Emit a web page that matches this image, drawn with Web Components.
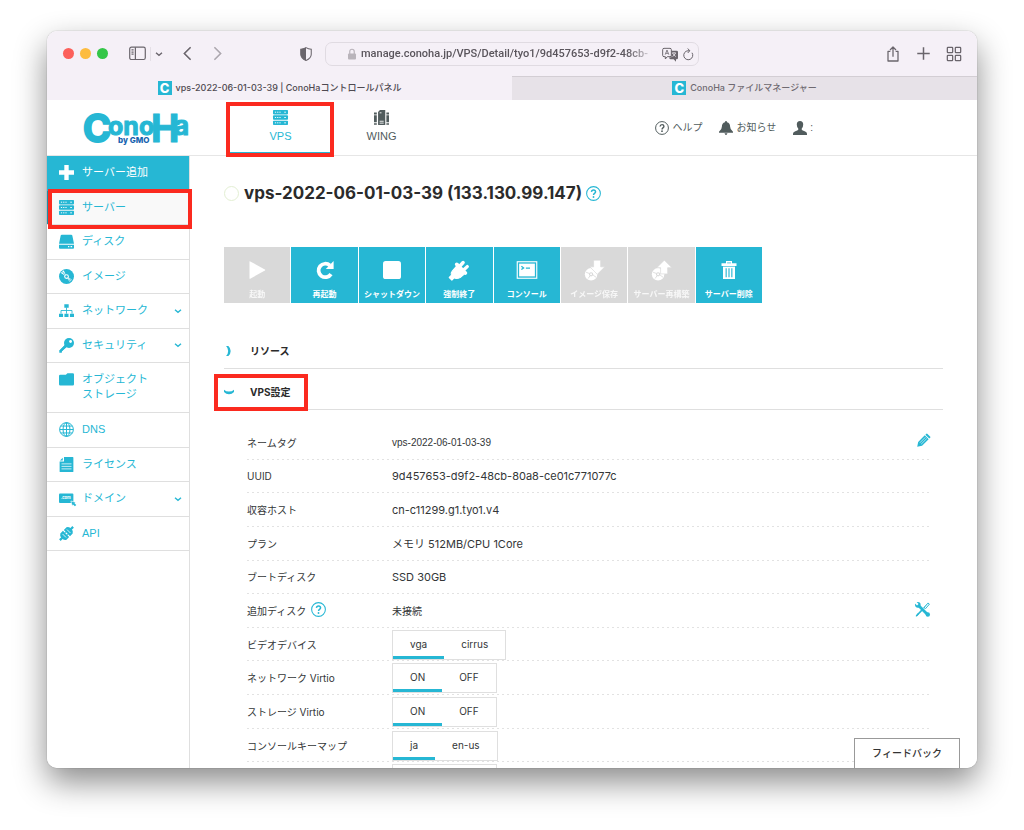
<!DOCTYPE html>
<html lang="ja">
<head>
<meta charset="utf-8">
<title>vps-2022-06-01-03-39 | ConoHa</title>
<style>
  :root {
    --cyan: #26b7d4;
    --ink: #333637;
    --line: #dfdfdf;
    --red: #fb2a1f;
    --ui: Inter, "Noto Sans CJK JP", sans-serif;
    --arial: "Liberation Sans", "Noto Sans CJK JP", sans-serif;
  }
  html, body { height: 100%; }
  body {
    margin: 0; padding: 31px 47px 62px; box-sizing: border-box;
    background: #fff; color: var(--ink); overflow: hidden;
    font: 10px/16px var(--ui);
  }
</style>
</head>
<body>
<mac-window>
  <safari-toolbar slot="toolbar"></safari-toolbar>
  <browser-tab slot="tabs" current>vps-2022-06-01-03-39 | ConoHaコントロールパネル</browser-tab>
  <browser-tab slot="tabs">ConoHa ファイルマネージャー</browser-tab>
  <conoha-header></conoha-header>
  <panel-layout>
    <side-nav slot="side">
      <side-item icon="plus" add>サーバー追加</side-item>
      <side-item icon="server" current>サーバー</side-item>
      <side-item icon="disk">ディスク</side-item>
      <side-item icon="cd">イメージ</side-item>
      <side-item icon="network" more>ネットワーク</side-item>
      <side-item icon="key" more>セキュリティ</side-item>
      <side-item icon="folder" tall>オブジェクト<br>ストレージ</side-item>
      <side-item icon="globe">DNS</side-item>
      <side-item icon="license">ライセンス</side-item>
      <side-item icon="domain" more>ドメイン</side-item>
      <side-item icon="api">API</side-item>
    </side-nav>
    <server-title>vps-2022-06-01-03-39 (133.130.99.147)</server-title>
    <action-bar>
      <action-button icon="play" off>起動</action-button>
      <action-button icon="reload">再起動</action-button>
      <action-button icon="stop">シャットダウン</action-button>
      <action-button icon="plug">強制終了</action-button>
      <action-button icon="console">コンソール</action-button>
      <action-button icon="cddown" off>イメージ保存</action-button>
      <action-button icon="cdup" off>サーバー再構築</action-button>
      <action-button icon="trash">サーバー削除</action-button>
    </action-bar>
    <accordion-section label="リソース"></accordion-section>
    <accordion-section label="VPS設定" open marked><vps-settings></vps-settings></accordion-section>
  </panel-layout>
  <feedback-button slot="float">フィードバック</feedback-button>
</mac-window>

<script>
const define = (name, html, setup) => customElements.define(name, class extends HTMLElement {
  constructor() {
    super();
    const t = document.createElement('template');
    t.innerHTML = html;
    this.attachShadow({ mode: 'open' }).append(t.content.cloneNode(true));
  }
  connectedCallback() { if (setup && !this.ready) { this.ready = true; setup(this, this.shadowRoot); } }
});

const rack = y => `<rect x="0" y="${y}" width="24" height="7" rx="1.3"/><path d="M3 ${y + 3.5}h2m1.6 0h2m1.6 0h2m5.8 0h2.600" stroke="#fff" stroke-width="1.5" fill="none"/>`;
const disc = '<circle cx="8.500" cy="16" r="7.500"/><path d="M2.500 13.500l4 1.500M11 17l3.500 2.500M5 21l2-3" stroke="#d9d9d9" stroke-width="1"/><circle cx="8.500" cy="16" r="2.500" fill="#d9d9d9"/><circle cx="8.500" cy="16" r="1.200"/>';
const ICONS = {
  server: rack(0) + rack(8.5) + rack(17),
  plus: '<path d="M8.500 0h7v8.500H24v7h-8.500V24h-7v-8.500H0v-7h8.500z"/>',
  disk: '<path d="M4.500 1h15q1.500 0 1.800 1.500L24 15.500H0L2.700 2.500Q3 1 4.500 1zM0 17h24v5q0 1.500-1.500 1.500h-21Q0 23.500 0 22z"/><path d="M14.500 20.300h2m2 0h2.500" stroke="#fff" stroke-width="2"/>',
  cd: '<circle cx="12" cy="12" r="12"/><path d="M12 12L3 6.500 7.500 2z" fill="#fff"/><path d="M12 12L5.500 4.500" stroke="currentColor" stroke-width="1.500"/><path d="M12 12l8.500 5.500M12 12l5.500 8.500M12 12l7 7" stroke="#fff" stroke-width="1"/><circle cx="12" cy="12" r="3.800" fill="#fff"/><circle cx="12" cy="12" r="2"/>',
  network: '<path d="M8.500 2h7v5.500h-7zM0 17h6.500v5.500H0zM8.700 17h6.500v5.500H8.700zM17.500 17H24v5.500h-6.500z"/><path d="M12 7v10M3.200 17v-5h17.600v5" fill="none" stroke="currentColor" stroke-width="1.400"/>',
  key: '<circle cx="16" cy="8" r="8"/><circle cx="18.500" cy="5.500" r="2.300" fill="#fff"/><path d="M11 9.500L.500 20v3.500h4V21L14 13"/><path d="M11 12L2 21.500" stroke="currentColor" stroke-width="3.500"/>',
  folder: '<path d="M2 4.500h9L13.500 2H22q2 0 2 2v15.500q0 2-2 2H2q-2 0-2-2v-13q0-2 2-2z"/>',
  globe: '<g fill="none" stroke="currentColor" stroke-width="1.600"><circle cx="12" cy="12" r="11"/><ellipse cx="12" cy="12" rx="5.500" ry="11"/><path d="M12 1v22M1 12h22M2.800 6.500h18.400M2.800 17.500h18.400"/></g>',
  license: '<path d="M8 0h14q1 0 1 1v22q0 1-1 1H2q-1 0-1-1V7h7zM6 1L1.500 5.500H6z"/><path d="M4 11h16M4 15h16M4 19h16" stroke="#fff" stroke-width="1.200"/>',
  domain: '<rect x="0" y="4" width="23" height="15" rx="1.500"/><text x="3" y="13.500" font-family="Inter, sans-serif" font-size="6.500" font-weight="700" fill="#fff">.com</text><path d="M19 16l7.500 2-5.500 5.500z" stroke="#fff" stroke-width="1"/><path d="M23 20l3.500 3.500" stroke="currentColor" stroke-width="3"/>',
  api: '<g transform="rotate(45 12 12)"><path d="M5 11V5Q7 1 12 1t7 4v6zM5 13v6q2 4 7 4t7-4v-6z"/><path d="M12-3v6M12 21v6" stroke="currentColor" stroke-width="3.500"/><path d="M9.500 9.500v5M14.500 9.500v5" stroke="currentColor" stroke-width="1.500"/><path d="M8 7h8M8 17h8" stroke="#fff" stroke-width="1.200"/></g>',
  wing: '<path d="M9.500 0h8.500v24H7.500q-1 0-1-1V3zM0 4h4.500v3H0zM0 8.500h4.500v11H0zM0 21h4.500v2.500H0zM19.800 4H24v3h-4.200zM19.800 8.500H24v11h-4.200zM19.800 21H24v2.500h-4.200z"/><path d="M9 4.500h3M9 18h6.500M9 21h6.500" stroke="#fff" stroke-width="1.400"/>',
  help: '<circle cx="12" cy="12" r="11" fill="none" stroke="currentColor" stroke-width="1.700"/><path d="M8.700 9.400q.3-3.200 3.400-3.200t3.200 2.900q0 1.600-1.700 2.700-1.500 1-1.500 2.600" fill="none" stroke="currentColor" stroke-width="2.400"/><circle cx="12" cy="17.500" r="1.500"/>',
  bell: '<path d="M12 0q1.800 0 1.800 2.200 5.200 1.300 5.200 7.300 0 5.500 5 9v1.500H0v-1.500q5-3.500 5-9 0-6 5.200-7.300Q10.200 0 12 0zM9.500 21h5q-.5 3-2.500 3t-2.500-3z"/>',
  user: '<path d="M12 0q5.500 0 5.500 6 0 4.500-2.500 7v2q1 1.500 5 2.500 4 1.200 4 4.500v2H0v-2q0-3.300 4-4.500 4-1 5-2.500v-2q-2.500-2.500-2.500-7 0-6 5.500-6z"/>',
  play: '<path d="M2 1q0-1 1-.500l19.500 10.700q1 .8 0 1.600L3 23.500q-1 .5-1-.500z"/>',
  reload: '<path d="M20 17.500A9 9 0 1 1 18.500 6" fill="none" stroke="currentColor" stroke-width="5"/><path d="M23.500 0v10.500H13z"/>',
  stop: '<rect x="0" y="0" width="24" height="24" rx="3.500"/>',
  plug: '<path d="M3 13.500L8.500 7 19 17.500 13.500 22Q9 24.500 5.500 22.500L2.500 25.500-1 22l3-3Q.5 16.500 3 13.500z" stroke="currentColor" stroke-width="1.500" stroke-linejoin="round"/><path d="M9 4.500L20.500 16" stroke="currentColor" stroke-width="5" stroke-linecap="round"/><path d="M12 8l5.500-6M17 13l6-5.500" stroke="currentColor" stroke-width="4.500" stroke-linecap="round"/>',
  console: '<rect x="-1" y="1" width="26" height="22" fill="none" stroke="currentColor" stroke-width="1.500"/><path d="M1.500 3.500h21v17h-21z"/><path d="M4.500 7l3 2.200-3 2.200M10.500 9.500h5.500" fill="none" stroke="var(--cyan)" stroke-width="1.700"/>',
  cddown: disc + '<path d="M11.500-1h8.500v8h5L16 16 7 7h4.500z" stroke="#d9d9d9" stroke-width=".8"/>',
  cdup: disc + '<path d="M11.500 15.500H20V8h5L16-1 7 8h4.500z" stroke="#d9d9d9" stroke-width=".8"/>',
  trash: '<path d="M8 0h8v3h6v3.500H2V3h6z"/><path d="M4 7.500h16V24H4z"/><path d="M8.200 9.500v12M12 9.500v12M15.800 9.500v12" stroke="var(--cyan)" stroke-width="1.500"/><path d="M9.500 2.500h5" stroke="var(--cyan)" stroke-width="1"/>',
  pencil: '<g transform="rotate(45 12 12)"><path d="M8.300-2h7.400q1 0 1 1v2.500H7.300V-1q0-1 1-1zM7.300 3h9.400v16L12 26l-4.700-7z"/><path d="M10.400 4.500v13.500M13.600 4.500v13.500" stroke="#fff" stroke-width="1"/></g>',
  tools: '<path d="M4 4l16 16" stroke="currentColor" stroke-width="4.500"/><circle cx="4.500" cy="4.500" r="4.500"/><path d="M0 0l4.500 4.500" stroke="#fff" stroke-width="3.500"/><circle cx="20.500" cy="20" r="3.500"/><path d="M22 2l-8 8M13 11L2 22.500" stroke="currentColor" stroke-width="2.500"/><path d="M15 8.500l5.500-6.500 2.500 1.500-6 7z" fill="#fff" stroke="currentColor" stroke-width="1.500"/><path d="M1 24l3-6 2 2z"/>',
  down: '<path d="M3 8l9 8 9-8" fill="none" stroke="currentColor" stroke-width="4"/>',
  right: '<path d="M5 0h5.500Q16 5 16 12t-5.500 12H5q5-5 5-12T5 0z"/>',
  dip: '<path d="M0 6.500q5 4.500 12 4.500t12-4.500V12q-5 5.500-12 5.500T0 12z"/>',
  back: '<path d="M17 2L7 12l10 10" fill="none" stroke="currentColor" stroke-width="2.600"/>',
  forward: '<path d="M7 2l10 10L7 22" fill="none" stroke="currentColor" stroke-width="2.600"/>',
  sidebar: '<g fill="none" stroke="currentColor" stroke-width="1.700"><rect x="1" y="3" width="22" height="17.500" rx="2.500"/><path d="M9 3v17.500M3.500 7h3M3.500 10h3M3.500 13h3"/></g>',
  shield: '<path d="M12 1q4 2.300 9 2.800v8.700q0 7-9 10.500-9-3.500-9-10.500V3.800Q8 3.300 12 1z" fill="none" stroke="currentColor" stroke-width="1.800"/><path d="M12 1v22q-9-3.500-9-10.500V3.800Q8 3.300 12 1z"/>',
  lock: '<rect x="4" y="11" width="16" height="12" rx="2"/><path d="M7.500 12V7q0-4.500 4.500-4.500T16.500 7v5" fill="none" stroke="currentColor" stroke-width="2.400"/>',
  translate: '<path d="M3 3.500h9q2 0 2 2V14q0 2-2 2H8l-3 3.500V16H3q-2 0-2-2V5.500q0-2 2-2z" fill="none" stroke="currentColor" stroke-width="1.500"/><path d="M4.800 13l2.700-7 2.700 7M5.700 11h3.600" fill="none" stroke="currentColor" stroke-width="1.200"/><path d="M14 7h8q2 0 2 2v9q0 2-2 2h-1v3.500L17.500 20H13q-2 0-2-2v-1h3z"/><path d="M15 10.500h6M18 9.500v1M16 16l4.500-5M16 11l4.500 5" stroke="#f5f0f7" stroke-width="1.200"/>',
  refresh: '<path d="M20 9.500A9 9 0 1 1 12 5.500h3M11.500 1l4 4.500-4 4.500" fill="none" stroke="currentColor" stroke-width="2"/>',
  share: '<path d="M8 8H4.500v14.500h15V8H16M12 16V1.500M7.500 6L12 1.500 16.500 6" fill="none" stroke="currentColor" stroke-width="1.900" stroke-linejoin="round"/>',
  add: '<path d="M12 2v20M2 12h20" stroke="currentColor" stroke-width="2.400"/>',
  grid: '<g fill="none" stroke="currentColor" stroke-width="1.900"><rect x="2" y="2" width="8" height="8" rx="1"/><rect x="14" y="2" width="8" height="8" rx="1"/><rect x="2" y="14" width="8" height="8" rx="1"/><rect x="14" y="14" width="8" height="8" rx="1"/></g>'
};

define('ui-icon', `<style>
  :host { display: inline-block; width: var(--size, 15px); height: var(--size, 15px); flex: none; }
  svg { display: block; width: 100%; height: 100%; overflow: visible; fill: currentColor; }
</style><svg viewBox="0 0 24 24" aria-hidden="true"></svg>`,
(el, root) => { root.querySelector('svg').innerHTML = ICONS[el.getAttribute('name')]; });

/* Red frame drawn over the parent box, reaching out by --out */
define('mark-frame', `<style>
  :host { position: absolute; inset: var(--out, 0); border: 4px solid var(--red); z-index: 2; pointer-events: none; }
</style>`);

define('mac-window', `<style>
  :host { display: block; height: 100%; position: relative; border-radius: 10px;
    box-shadow: 0 0 1px rgba(0,0,0,.5), 0 14px 32px rgba(0,0,0,.46); }
  .frame { display: flex; flex-direction: column; height: 100%; position: relative; overflow: hidden; border-radius: 10px; background: #fff; }
  .tabs { display: grid; grid-template-columns: 1fr 1fr; flex: none; }
</style><div class="frame"><slot name="toolbar"></slot><div class="tabs" role="tablist"><slot name="tabs"></slot></div><slot></slot><slot name="float"></slot></div>`);

define('safari-toolbar', `<style>
  :host { display: grid; grid-template-columns: 1fr minmax(0, 374px) 1fr; align-items: center; height: 45px; flex: none; background: #f5f0f7; color: #6a656c; }
  .left, .right { display: flex; align-items: center; }
  .left { padding: 0 12px 0 16px; }
  .lights { display: flex; gap: 6px; margin-right: 21px; }
  .lights i { width: 11px; height: 11px; border-radius: 50%; }
  button { border: 0; padding: 0; margin: 0; background: none; color: inherit; display: flex; }
  .divider { width: 1px; height: 14px; margin: 0 4px; background: #e4dfe6; }
  .menu { --size: 8px; }
  .back { --size: 15px; margin-left: 17px; }
  .forward { --size: 15px; margin-left: 15px; color: #aca7ae; }
  .shield { --size: 14px; margin-left: auto; }
  .right { justify-content: flex-end; gap: 15px; padding-right: 15px; --size: 16px; }
  .url { display: flex; align-items: center; height: 24px; box-sizing: border-box; border: 1px solid #e0dbe2; border-radius: 7px; padding: 0 4px 0 20px; }
  .url ui-icon { --size: 12px; color: #b9b4bb; }
  input { flex: 1; min-width: 0; border: 0; padding: 0; margin: 0 6px 0 3px; background: none; outline: 0; color: #5a555c; font: 500 11px/16px Roboto, sans-serif;
    mask-image: linear-gradient(to right, #000 90%, transparent); }
  .url button { color: #6a656c; margin-right: 4px; }
  .url button ui-icon { color: inherit; }
  .url .tr ui-icon { --size: 16px; }
  .url .re { margin: 0; }
</style>
<div class="left">
  <div class="lights"><i style="background:#fc605b"></i><i style="background:#fdbc40"></i><i style="background:#34c648"></i></div>
  <button aria-label="サイドバー"><ui-icon name="sidebar" style="--size:17px"></ui-icon></button>
  <span class="divider"></span>
  <button class="menu" aria-label="メニュー"><ui-icon name="down"></ui-icon></button>
  <button class="back" aria-label="戻る"><ui-icon name="back"></ui-icon></button>
  <button class="forward" aria-label="進む"><ui-icon name="forward"></ui-icon></button>
  <button class="shield" aria-label="プライバシー"><ui-icon name="shield"></ui-icon></button>
</div>
<div class="url">
  <ui-icon name="lock"></ui-icon>
  <input type="text" aria-label="アドレス" value="manage.conoha.jp/VPS/Detail/tyo1/9d457653-d9f2-48cb-">
  <button class="tr" aria-label="翻訳"><ui-icon name="translate"></ui-icon></button>
  <button class="re" aria-label="再読み込み"><ui-icon name="refresh"></ui-icon></button>
</div>
<div class="right">
  <button aria-label="共有"><ui-icon name="share"></ui-icon></button>
  <button aria-label="新規タブ"><ui-icon name="add" style="--size:15px"></ui-icon></button>
  <button aria-label="タブ一覧"><ui-icon name="grid"></ui-icon></button>
</div>`);

define('browser-tab', `<style>
  :host { display: block; min-width: 0; background: #e7e2e8; color: #6f6a71; box-shadow: inset 0 1px #d3ced4; }
  :host([current]) { background: #f5f0f7; color: #4f4a51; box-shadow: none; }
  button { display: flex; width: 100%; height: 24px; align-items: center; justify-content: center; gap: 4px; padding: 0; border: 0; background: none; color: inherit;
    font: 500 9px/16px var(--ui); white-space: nowrap; }
  .fav { width: 14px; height: 14px; background: var(--cyan); color: #fff; font: 800 13px/14px var(--ui); text-align: center; }
</style><button role="tab"><span class="fav">C</span><span><slot></slot></span></button>`);

define('conoha-header', `<style>
  :host { display: flex; height: 56px; box-sizing: border-box; border-bottom: 1px solid #e6e6e6; flex: none; color: #515c5d; font-family: var(--arial); }
  .logo { display: block; margin: 10px 40px 0 37px; width: 106px; height: 36px; }
  .logo svg { display: block; overflow: visible; font-family: Inter, sans-serif; font-weight: 700; }
  nav { display: flex; }
  nav a { position: relative; width: 101px; display: flex; flex-direction: column; align-items: center; gap: 3px; padding-top: 10px; box-sizing: border-box; height: 54px;
    color: inherit; text-decoration: none; font-size: 11px; line-height: 16px; }
  nav a[aria-current] { color: var(--cyan); border-bottom: 2px solid var(--cyan); }
  mark-frame { --out: 2px -3px -5px -4px; }
  .user { margin-left: auto; display: flex; align-items: center; gap: 17px; padding-right: 164px; }
  .user a { display: flex; align-items: center; gap: 3px; color: inherit; text-decoration: none; font-size: 10px; --size: 14px; }
</style>
<a class="logo" href="#" aria-label="ConoHa by GMO"><svg width="106" height="36" viewBox="0 0 106 36" fill="#26b7d4" stroke="#26b7d4" stroke-width="1">
  <text x="-1" y="32" font-size="38" stroke-width="2">C</text>
  <text x="24" y="25" font-size="25">ono</text>
  <text x="67" y="32" font-size="38">H</text>
  <text x="90" y="25" font-size="26">a</text>
  <text x="34" y="33" font-size="8" stroke="none" fill="#1763b0" font-weight="800">by GMO</text>
</svg></a>
<nav>
  <a href="#" aria-current="page"><ui-icon name="server"></ui-icon><span>VPS</span><mark-frame></mark-frame></a>
  <a href="#"><ui-icon name="wing"></ui-icon><span>WING</span></a>
</nav>
<div class="user">
  <a href="#"><ui-icon name="help"></ui-icon>ヘルプ</a>
  <a href="#"><ui-icon name="bell"></ui-icon>お知らせ</a>
  <a href="#"><ui-icon name="user"></ui-icon>:</a>
</div>`);

define('panel-layout', `<style>
  :host { display: flex; flex: 1; min-height: 0; }
  main { flex: 1; min-width: 0; padding: 25px 34px 0; overflow: hidden; }
</style><slot name="side"></slot><main><slot></slot></main>`);

define('side-nav', `<style>
  :host { display: block; width: 143px; box-sizing: border-box; border-right: 1px solid var(--line); flex: none; }
  nav { display: grid; height: 395px; grid-template-rows: repeat(6, 1fr) 50px repeat(4, 1fr); }
</style><nav><slot></slot></nav>`);

define('side-item', `<style>
  :host { display: grid; min-height: 0; border-bottom: 1px solid var(--line); color: var(--cyan); position: relative; }
  :host([add]) { background: var(--cyan); color: #fff; border-color: var(--cyan); }
  :host([current]) { background: #f9f9f9; box-shadow: inset 2px 0 #1c8ea6; }
  a { display: flex; align-items: center; gap: 8px; padding: 0 7px 0 12px; color: inherit; text-decoration: none; font: 11px/15px var(--arial); }
  :host([tall]) a { align-items: flex-start; padding-top: 9px; }
  .more { --size: 8px; margin-left: auto; }
  mark-frame { --out: -2px -3px -5px 1px; }
</style><a href="#"><span><slot></slot></span></a>`,
(el, root) => {
  const a = root.querySelector('a');
  a.insertAdjacentHTML('afterbegin', `<ui-icon name="${el.getAttribute('icon')}"></ui-icon>`);
  if (el.hasAttribute('more')) a.insertAdjacentHTML('beforeend', '<ui-icon class="more" name="down"></ui-icon>');
  if (el.hasAttribute('current')) root.append(document.createElement('mark-frame'));
});

define('server-title', `<style>
  :host { display: flex; align-items: center; height: 24px; }
  .state { width: 15px; height: 15px; box-sizing: border-box; border: 1px solid #e3efd3; border-radius: 50%; margin-right: 5px; }
  h1 { margin: 0 4px 0 0; font: 700 17px/24px var(--ui); color: #2b2b2b; white-space: nowrap; }
  a { color: var(--cyan); display: flex; }
</style><span class="state"></span><h1><slot></slot></h1><a href="#" aria-label="ヘルプ"><ui-icon name="help"></ui-icon></a>`);

define('action-bar', `<style>
  :host { display: grid; grid-template-columns: repeat(8, 1fr); gap: 1px; max-width: 538px; margin: 42px 0 25px; }
</style><slot></slot>`);

define('action-button', `<style>
  :host { display: block; min-width: 0; --size: 18px; }
  :host([icon^="cd"]) { --size: 20px; }
  button { display: flex; flex-direction: column; align-items: center; justify-content: space-between; width: 100%; height: 56px; padding: 14px 0 3px; border: 0; background: var(--cyan); color: #fff;
    font: 700 8px/12px var(--ui); white-space: nowrap; }
  button:disabled { background: #d9d9d9; }
  button:disabled span { opacity: .8; }
</style><button><span><slot></slot></span></button>`,
(el, root) => {
  const b = root.querySelector('button');
  b.disabled = el.hasAttribute('off');
  b.insertAdjacentHTML('afterbegin', `<ui-icon name="${el.getAttribute('icon')}"></ui-icon>`);
});

define('accordion-section', `<style>
  :host { display: block; }
  h2 { margin: 0; height: 41px; box-sizing: border-box; border-bottom: 1px solid var(--line); padding-top: 6px; display: flex; }
  button { position: relative; display: flex; align-items: center; gap: 16px; border: 0; padding: 0; background: none; color: #2b2b2b; font: 700 10px/16px var(--ui); }
  ui-icon { color: var(--cyan); --size: 10px; }
  mark-frame { --out: -1px -17px -2px -10px; }
</style><h2><button></button></h2><slot></slot>`,
(el, root) => {
  const open = el.hasAttribute('open'), b = root.querySelector('button');
  b.setAttribute('aria-expanded', open);
  b.innerHTML = `<ui-icon name="${open ? 'dip' : 'right'}"></ui-icon><span></span>`;
  b.lastChild.textContent = el.getAttribute('label');
  if (el.hasAttribute('marked')) b.append(document.createElement('mark-frame'));
});

define('choice-group', `<style>
  :host { display: inline-block; font-size: 10px; }
  fieldset { display: flex; height: 30px; box-sizing: border-box; margin: 0; padding: 0; border: 1px solid var(--line); background: #fff; min-width: 0; }
  label { position: relative; padding: 0 17px; line-height: 26px; }
  label:has(:checked) { box-shadow: inset 0 -3px var(--cyan); }
  input { appearance: none; position: absolute; inset: 0; margin: 0; }
</style><fieldset></fieldset>`,
(el, root) => {
  const box = root.querySelector('fieldset');
  box.setAttribute('aria-label', el.getAttribute('label'));
  el.getAttribute('options').split(' ').forEach((text, i) => {
    const l = document.createElement('label');
    l.innerHTML = `<input type="radio" name="choice"${i ? '' : ' checked'}>`;
    l.append(text);
    box.append(l);
  });
});

define('vps-settings', `<style>
  dl { display: grid; grid-auto-rows: 1fr; height: 370px; margin: 16px 11px 0 23px; }
  dl > div { display: grid; grid-template-columns: 145px 1fr auto; align-items: center; min-height: 0;
    background: repeating-linear-gradient(to right, #e2e2e2 0 2px, transparent 2px 5px) bottom / 100% 1px no-repeat; }
  dt, dd { margin: 0; display: flex; align-items: center; gap: 5px; }
  .code { font-size: 11px; }
  .name { font-family: var(--arial); }
  button, dt a { border: 0; padding: 0 0 3px; background: none; color: var(--cyan); display: flex; }
  button { margin-right: 2px; }
  .rest { width: 105px; height: 30px; box-sizing: border-box; border: 1px solid var(--line); }
</style>
<dl>
  <div><dt>ネームタグ</dt><dd class="name">vps-2022-06-01-03-39</dd><button aria-label="編集"><ui-icon name="pencil" style="--size:14px"></ui-icon></button></div>
  <div><dt>UUID</dt><dd class="code">9d457653-d9f2-48cb-80a8-ce01c771077c</dd></div>
  <div><dt>収容ホスト</dt><dd class="code">cn-c11299.g1.tyo1.v4</dd></div>
  <div><dt>プラン</dt><dd class="code">メモリ 512MB/CPU 1Core</dd></div>
  <div><dt>ブートディスク</dt><dd class="code">SSD 30GB</dd></div>
  <div><dt>追加ディスク<a href="#" aria-label="ヘルプ"><ui-icon name="help"></ui-icon></a></dt><dd>未接続</dd><button aria-label="設定"><ui-icon name="tools"></ui-icon></button></div>
  <div><dt>ビデオデバイス</dt><dd><choice-group label="ビデオデバイス" options="vga cirrus"></choice-group></dd></div>
  <div><dt>ネットワーク Virtio</dt><dd><choice-group label="ネットワーク Virtio" options="ON OFF"></choice-group></dd></div>
  <div><dt>ストレージ Virtio</dt><dd><choice-group label="ストレージ Virtio" options="ON OFF"></choice-group></dd></div>
  <div><dt>コンソールキーマップ</dt><dd><choice-group label="コンソールキーマップ" options="ja en-us"></choice-group></dd></div>
  <div><dt></dt><dd><span class="rest"></span></dd></div>
</dl>`);

define('feedback-button', `<style>
  :host { position: absolute; right: 17px; bottom: 0; }
  button { display: block; width: 106px; height: 30px; padding: 0 0 2px; border: 1px solid #999; border-bottom: 0; background: #fff; color: #333; font: 500 10px/16px var(--ui); }
</style><button><slot></slot></button>`);
</script>
</body>
</html>
